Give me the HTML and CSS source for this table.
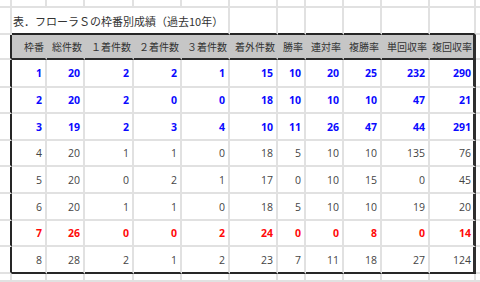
FILE: index.html
```html
<!DOCTYPE html>
<html lang="ja">
<head>
<meta charset="utf-8">
<link rel="stylesheet" href="styles.css">
</head>
<body>
<div class="sheet">
  <!-- row 0 (partial) -->
  <div class="c"></div><div class="c"></div><div class="c"></div><div class="c"></div><div class="c"></div><div class="c"></div><div class="c"></div><div class="c"></div><div class="c"></div><div class="c"></div><div class="c"></div><div class="c"></div><div class="c nr"></div>
  <!-- title row -->
  <div class="c"></div>
  <div class="c tb title">表．フローラＳの枠番別成績（過去10年）</div>
  <div class="c tb"></div><div class="c tb"></div><div class="c tb"></div><div class="c tb"></div><div class="c tb"></div><div class="c tb"></div>
  <div class="c nr"></div>
  <!-- header -->
  <div class="c lb"></div>
  <div class="c hd">枠番</div><div class="c hd">総件数</div><div class="c hd">１着件数</div><div class="c hd">２着件数</div><div class="c hd">３着件数</div><div class="c hd">着外件数</div><div class="c hd">勝率</div><div class="c hd">連対率</div><div class="c hd">複勝率</div><div class="c hd">単回収率</div><div class="c hd rb">複回収率</div>
  <div class="c nr"></div>
  <!-- data 1 -->
  <div class="c lb"></div>
  <div class="c n blue">1</div><div class="c n blue">20</div><div class="c n blue">2</div><div class="c n blue">2</div><div class="c n blue">1</div><div class="c n blue">15</div><div class="c n blue">10</div><div class="c n blue">20</div><div class="c n blue">25</div><div class="c n blue">232</div><div class="c n blue rb">290</div>
  <div class="c nr"></div>
  <!-- data 2 -->
  <div class="c lb"></div>
  <div class="c n blue">2</div><div class="c n blue">20</div><div class="c n blue">2</div><div class="c n blue">0</div><div class="c n blue">0</div><div class="c n blue">18</div><div class="c n blue">10</div><div class="c n blue">10</div><div class="c n blue">10</div><div class="c n blue">47</div><div class="c n blue rb">21</div>
  <div class="c nr"></div>
  <!-- data 3 -->
  <div class="c lb"></div>
  <div class="c n blue">3</div><div class="c n blue">19</div><div class="c n blue">2</div><div class="c n blue">3</div><div class="c n blue">4</div><div class="c n blue">10</div><div class="c n blue">11</div><div class="c n blue">26</div><div class="c n blue">47</div><div class="c n blue">44</div><div class="c n blue rb">291</div>
  <div class="c nr"></div>
  <!-- data 4 -->
  <div class="c lb"></div>
  <div class="c n">4</div><div class="c n">20</div><div class="c n">1</div><div class="c n">1</div><div class="c n">0</div><div class="c n">18</div><div class="c n">5</div><div class="c n">10</div><div class="c n">10</div><div class="c n">135</div><div class="c n rb">76</div>
  <div class="c nr"></div>
  <!-- data 5 -->
  <div class="c lb"></div>
  <div class="c n">5</div><div class="c n">20</div><div class="c n">0</div><div class="c n">2</div><div class="c n">1</div><div class="c n">17</div><div class="c n">0</div><div class="c n">10</div><div class="c n">15</div><div class="c n">0</div><div class="c n rb">45</div>
  <div class="c nr"></div>
  <!-- data 6 -->
  <div class="c lb"></div>
  <div class="c n">6</div><div class="c n">20</div><div class="c n">1</div><div class="c n">1</div><div class="c n">0</div><div class="c n">18</div><div class="c n">5</div><div class="c n">10</div><div class="c n">10</div><div class="c n">19</div><div class="c n rb">20</div>
  <div class="c nr"></div>
  <!-- data 7 -->
  <div class="c lb"></div>
  <div class="c n red">7</div><div class="c n red">26</div><div class="c n red">0</div><div class="c n red">0</div><div class="c n red">2</div><div class="c n red">24</div><div class="c n red">0</div><div class="c n red">0</div><div class="c n red">8</div><div class="c n red">0</div><div class="c n red rb">14</div>
  <div class="c nr"></div>
  <!-- data 8 -->
  <div class="c lb"></div>
  <div class="c n bb">8</div><div class="c n bb">28</div><div class="c n bb">2</div><div class="c n bb">1</div><div class="c n bb">2</div><div class="c n bb">23</div><div class="c n bb">7</div><div class="c n bb">11</div><div class="c n bb">18</div><div class="c n bb">27</div><div class="c n bb rb">124</div>
  <div class="c nr"></div>
  <!-- row below (partial) -->
  <div class="c"></div><div class="c"></div><div class="c"></div><div class="c"></div><div class="c"></div><div class="c"></div><div class="c"></div><div class="c"></div><div class="c"></div><div class="c"></div><div class="c"></div><div class="c"></div><div class="c nr"></div>
</div>
</body>
</html>
```

FILE: styles.css
```css
html, body {
  margin: 0;
  padding: 0;
  background: #ffffff;
}
body {
  width: 480px;
  height: 282px;
  overflow: hidden;
  font-family: "Noto Sans CJK JP", "Noto Sans", sans-serif;
  color: #333333;
}
.sheet {
  display: grid;
  grid-template-columns: 12px 35px 38px 49px 48px 48px 48px 28px 38px 38px 48px 46px 4px;
  grid-template-rows: 8px 27px 25px 28px 26px 27px 26px 27px 27px 26px 27px 8px;
}
.c {
  box-sizing: border-box;
  border-right: 2px solid #e1e1e1;
  border-bottom: 2px solid #e1e1e1;
  min-width: 0;
  white-space: nowrap;
}
.nr {
  border-right: none;
}
.tb {
  border-bottom: 2px solid #262626;
}
.lb {
  border-right: 2px solid #262626;
}
.title {
  grid-column: span 5;
  display: flex;
  align-items: center;
  padding-left: 1px;
  padding-top: 1px;
  font-size: 11px;
  color: #333333;
}
.hd {
  background: #c6c6c6;
  border-right-color: #c6c6c6;
  border-bottom: 2px solid #2a2a2a;
  display: flex;
  align-items: center;
  justify-content: flex-end;
  padding-right: 1px;
  font-size: 10px;
  color: #333333;
}
.rb {
  border-right: 3px solid #2e2e2e;
}
.hd.rb {
  border-right: 3px solid #2e2e2e;
}
.n {
  display: flex;
  align-items: center;
  justify-content: flex-end;
  padding-right: 3px;
  font-family: "Open Sans", "Liberation Sans", sans-serif;
  font-size: 10.5px;
  color: #444444;
}
.rb.n {
  padding-right: 2px;
}
.blue {
  color: #0a0aff;
  font-weight: bold;
}
.red {
  color: #ff0a0a;
  font-weight: bold;
}
.bb {
  border-bottom: 2px solid #262626;
}
```
